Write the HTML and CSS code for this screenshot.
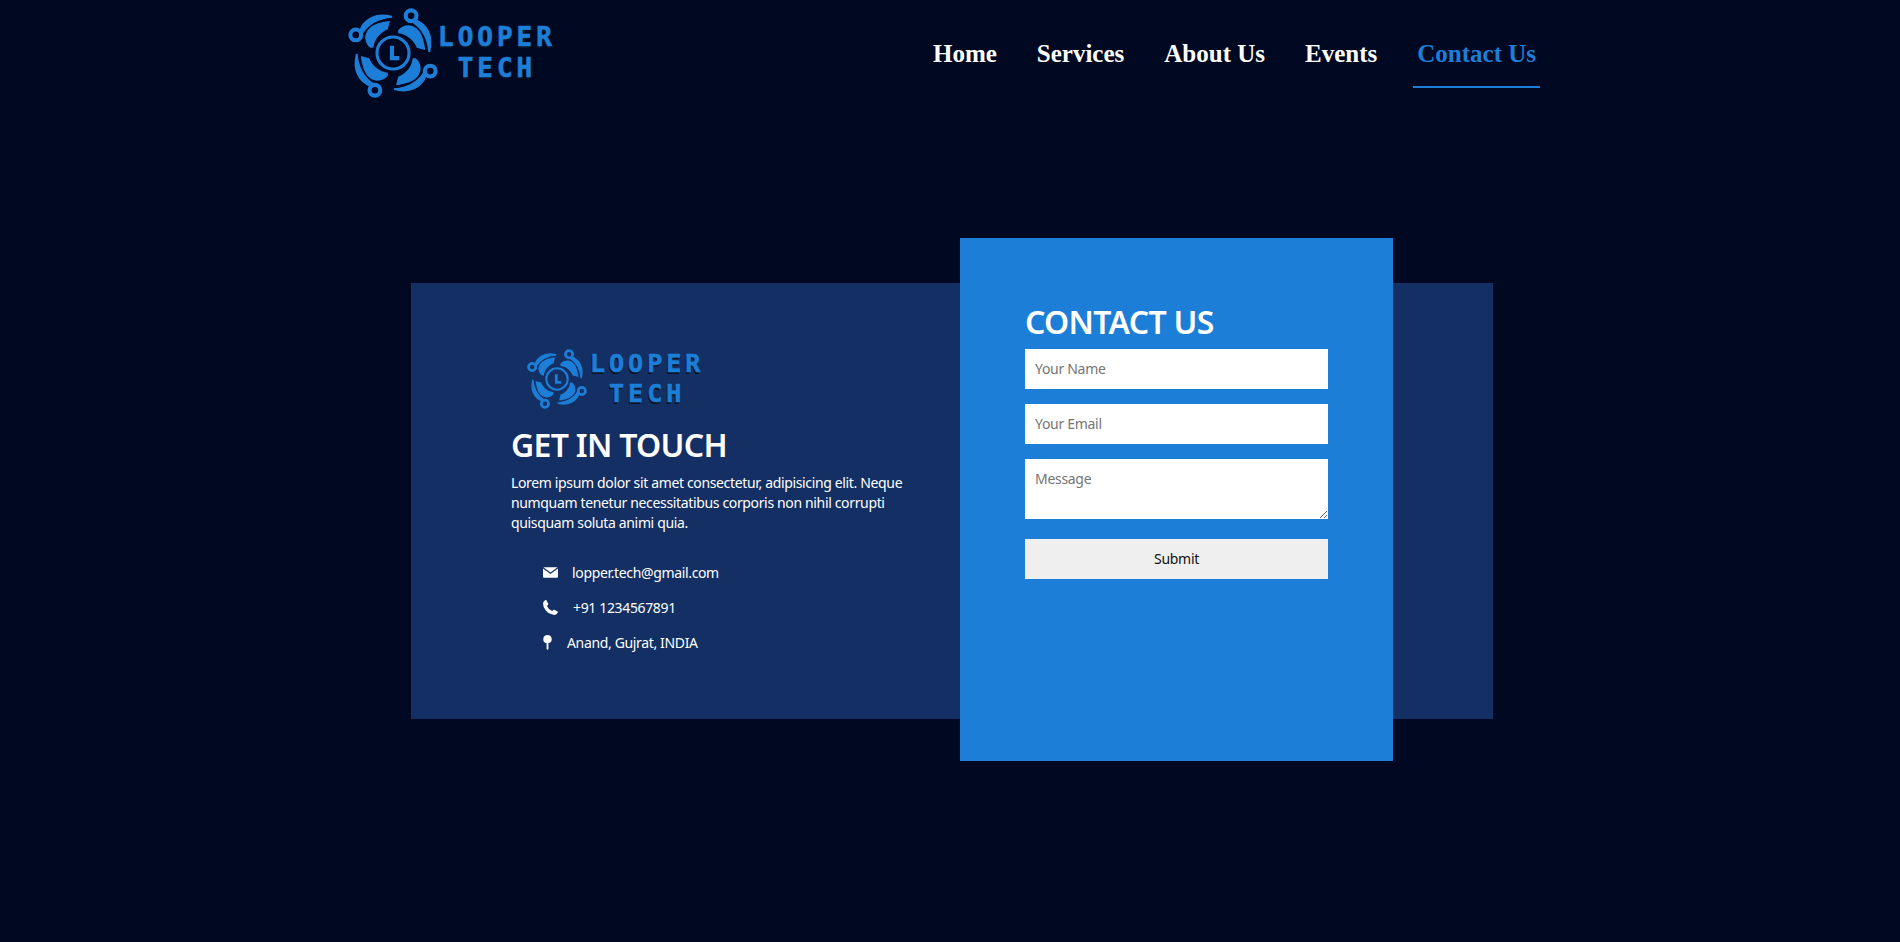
FILE: index.html
```html
<!DOCTYPE html>
<html lang="en">
<head>
    <meta charset="UTF-8" />
    <meta name="viewport" content="width=device-width, initial-scale=1" />
    <title>Contact Us - Looper Tech</title>
    <link rel="stylesheet" href="styles.css">
</head>
<body>
    <!-- Shared logo mark -->
    <svg class="svg-defs" width="0" height="0">
        <symbol id="logoMark" viewBox="-43.5 -43.5 87 87">
            <g id="logoArm">
                <circle cx="17.5" cy="-36" r="5.2" fill="none" stroke="#1c7ed6" stroke-width="4" />
                <path d="M21 -32 C33 -28 39 -16 35 -1 C34 -13 30 -23 19 -30 Z" fill="#1c7ed6" stroke="#1c7ed6" stroke-width="1.8" />
                <path d="M5 -22 C12 -30 24 -28 28.5 -15 C30 -10 31 -6 31 -3 L23 -5 C20 -12 14 -18 5 -19 Z" fill="#1c7ed6" />
            </g>
            <use href="#logoArm" transform="rotate(90)" />
            <use href="#logoArm" transform="rotate(180)" />
            <use href="#logoArm" transform="rotate(270)" />
            <circle r="15.5" fill="none" stroke="#1c7ed6" stroke-width="3" />
            <path d="M-3 -7 H1 V3 H6 V7 H-3 Z" fill="#1c7ed6" />
        </symbol>
    </svg>

    <header class="site-header">
        <a href="#" class="logo">
            <svg class="logo-mark"><use href="#logoMark" /></svg>
            <span class="logo-text"><span>LOOPER</span><span>TECH</span></span>
        </a>
        <nav>
            <ul>
                <li><a href="#">Home</a></li>
                <li><a href="#">Services</a></li>
                <li><a href="#">About Us</a></li>
                <li><a href="#">Events</a></li>
                <li><a href="#" class="active">Contact Us</a></li>
            </ul>
        </nav>
    </header>

    <main class="contact-card">
        <section class="contact-info">
            <a href="#" class="logo logo-small">
                <svg class="logo-mark"><use href="#logoMark" /></svg>
                <span class="logo-text"><span>LOOPER</span><span>TECH</span></span>
            </a>
            <h2>GET IN TOUCH</h2>
            <p>Lorem ipsum dolor sit amet consectetur, adipisicing elit. Neque numquam tenetur necessitatibus corporis non nihil corrupti quisquam soluta animi quia.</p>
            <ul class="contact-list">
                <li>
                    <svg class="icon-mail" viewBox="0 0 14 10"><path d="M0.4 0 H13.6 L7 5 Z M0 1.2 L7 6.5 L14 1.2 V9 Q14 10 13 10 H1 Q0 10 0 9 Z" fill="#fff" /></svg>
                    lopper.tech@gmail.com
                </li>
                <li>
                    <svg class="icon-phone" viewBox="0 0 15 15"><path d="M3.4 0.3 L5.2 3.8 Q5.4 4.4 5 4.8 L3.9 5.9 Q5.4 9.3 9.2 11 L10.3 9.9 Q10.8 9.5 11.4 9.8 L14.6 11.6 Q15.1 12 14.8 12.6 Q13.6 15 11.4 14.9 Q6 14.4 2.8 10.6 Q0 7.4 0 3.6 Q0.2 1.2 2.4 0.1 Q3 -0.1 3.4 0.3 Z" fill="#fff" /></svg>
                    +91 1234567891
                </li>
                <li>
                    <svg class="icon-pin" viewBox="0 0 9 15"><path d="M4.5 0 A4.2 4.2 0 0 1 5.4 8.3 V14 Q4.5 15.4 3.6 14 V8.3 A4.2 4.2 0 0 1 4.5 0 Z" fill="#fff" /></svg>
                    Anand, Gujrat, INDIA
                </li>
            </ul>
        </section>

        <section class="contact-form">
            <h2>CONTACT US</h2>
            <form>
                <input type="text" placeholder="Your Name" />
                <input type="email" placeholder="Your Email" />
                <textarea placeholder="Message"></textarea>
                <button type="button">Submit</button>
            </form>
        </section>
    </main>
</body>
</html>
```

FILE: styles.css
```css
/* Reset some default styles */
* {
    margin: 0;
    padding: 0;
    box-sizing: border-box;
}

body {
    font-family: 'Noto Sans', 'Open Sans', sans-serif;
    background-color: #000822;
    color: #fff;
    min-height: 100vh;
}

.svg-defs {
    display: block;
    height: 0;
}

/* Header styles */
.site-header {
    width: 1204px;
    margin: 0 auto;
    padding: 8px 12px 0 0;
    display: flex;
    justify-content: space-between;
    align-items: flex-start;
}

.site-header nav ul {
    list-style: none;
    display: flex;
    gap: 32px;
}

.site-header nav a {
    display: block;
    font-family: 'Liberation Serif', serif;
    font-size: 25px;
    font-weight: 700;
    line-height: 27px;
    color: #fff;
    text-decoration: none;
    padding: 32px 4px 19px;
    border-bottom: 2px solid transparent;
}

.site-header nav a.active {
    color: #1c7ed6;
    border-bottom-color: #1c7ed6;
}

/* Logo */
.logo {
    display: flex;
    align-items: center;
    text-decoration: none;
}

.logo-mark {
    width: 90px;
    height: 90px;
    flex-shrink: 0;
}

.logo-text {
    display: flex;
    flex-direction: column;
    align-items: center;
    margin-left: 0;
    font-family: 'DejaVu Sans Mono', monospace;
    font-size: 26px;
    font-weight: 700;
    line-height: 31px;
    letter-spacing: 4px;
    color: #1c7ed6;
    -webkit-text-stroke: 0.6px #1c7ed6;
    text-shadow: -1px 2px 0 #0b1420;
}

.logo-small {
    margin-left: 16px;
}

.logo-small .logo-mark {
    width: 60px;
    height: 60px;
}

.logo-small .logo-text {
    margin-left: 3px;
    font-size: 25px;
    line-height: 30px;
}

/* Contact card */
.contact-card {
    width: 1082px;
    height: 436px;
    margin: 185px 0 0 411px;
    display: flex;
    align-items: flex-start;
    background-color: #142f63;
}

.contact-info {
    width: 549px;
    padding: 66px 49px 0 100px;
    letter-spacing: -0.35px;
}

.contact-info h2,
.contact-form h2 {
    font-size: 32px;
    font-weight: 600;
    line-height: 38px;
    letter-spacing: -0.7px;
    color: #fff;
}

.contact-info h2 {
    margin-top: 17px;
}

.contact-info p {
    margin-top: 9px;
    font-size: 14px;
    line-height: 20px;
}

.contact-list {
    list-style: none;
    margin-top: 22px;
    padding-left: 32px;
}

.contact-list li {
    display: flex;
    align-items: center;
    gap: 15px;
    height: 35px;
    font-size: 14px;
}

.icon-mail {
    width: 15px;
    height: 11px;
    margin-right: -1px;
}

.icon-phone {
    width: 15px;
    height: 15px;
}

.icon-pin {
    width: 9px;
    height: 15px;
}

/* Form panel */
.contact-form {
    width: 433px;
    height: 523px;
    margin-top: -45px;
    padding: 61px 65px 0;
    background-color: #1c7ed6;
}

.contact-form h2 {
    line-height: 46px;
    margin-bottom: 4px;
}

.contact-form form {
    display: flex;
    flex-direction: column;
}

.contact-form input,
.contact-form textarea,
.contact-form button {
    width: 303px;
    height: 40px;
    border: none;
    border-radius: 0;
    padding: 0 10px 2px;
    font-family: 'Noto Sans', 'Open Sans', sans-serif;
    font-size: 14px;
    letter-spacing: -0.3px;
    outline: none;
}

.contact-form input {
    margin-bottom: 15px;
    background-color: #fff;
}

.contact-form textarea {
    height: 60px;
    padding-top: 10px;
    margin-bottom: 20px;
    background-color: #fff;
}

.contact-form button {
    background-color: #efefef;
    color: #111;
}
```
